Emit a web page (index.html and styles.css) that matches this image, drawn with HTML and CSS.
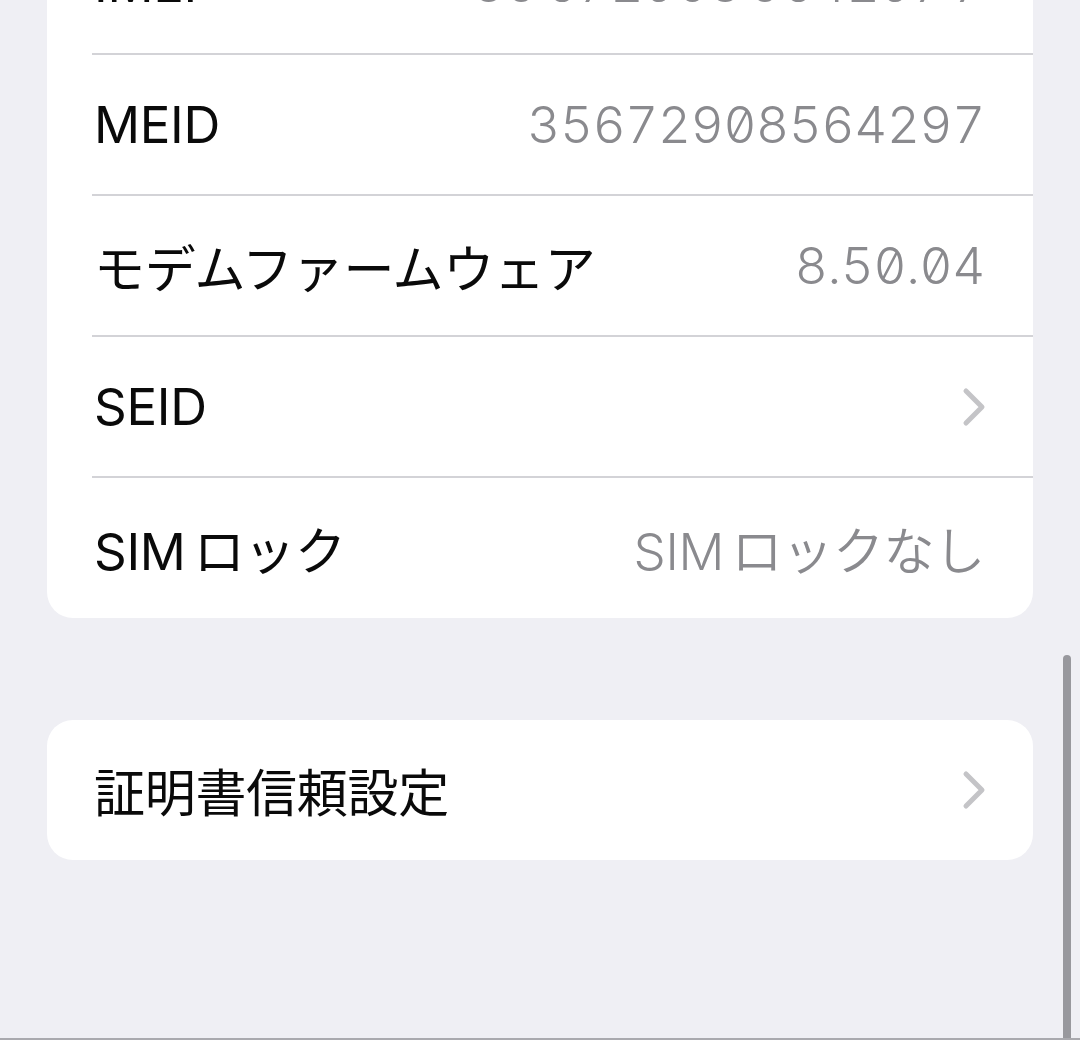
FILE: index.html
```html
<!DOCTYPE html>
<html lang="ja">
<head>
<meta charset="utf-8">
<title>情報</title>
<link rel="stylesheet" href="styles.css">
</head>
<body>
<main class="page">
  <section class="card">
    <div class="row">
      <span class="label">IMEI</span>
      <span class="value">35 672908 564297 7</span>
    </div>
    <div class="row">
      <span class="label">MEID</span>
      <span class="value">35672908564297</span>
    </div>
    <div class="row">
      <span class="label">モデムファームウェア</span>
      <span class="value">8.50.04</span>
    </div>
    <div class="row">
      <span class="label">SEID</span>
      <svg class="chevron" viewBox="0 0 24 40" width="24" height="40" aria-hidden="true"><path d="M4 4 L20 20 L4 36" fill="none" stroke="#c4c4c7" stroke-width="5" stroke-linecap="round" stroke-linejoin="round"/></svg>
    </div>
    <div class="row">
      <span class="label">SIM ロック</span>
      <span class="value">SIM ロックなし</span>
    </div>
  </section>

  <section class="card">
    <div class="row row-single">
      <span class="label">証明書信頼設定</span>
      <svg class="chevron" viewBox="0 0 24 40" width="24" height="40" aria-hidden="true"><path d="M4 4 L20 20 L4 36" fill="none" stroke="#c4c4c7" stroke-width="5" stroke-linecap="round" stroke-linejoin="round"/></svg>
    </div>
  </section>
</main>
<div class="scrollbar"></div>
<div class="bottom-line"></div>
</body>
</html>
```

FILE: styles.css
```css
html, body {
  margin: 0;
  padding: 0;
  height: 100%;
  overflow: hidden;
}

body {
  background: #efeff4;
  font-family: "Inter", "Noto Sans CJK JP", sans-serif;
  font-size: 51px;
  color: #0a0a0a;
  position: relative;
}

.page {
  display: flex;
  flex-direction: column;
  gap: 102px;
  padding: 0 47px;
  margin-top: -86px;
}

.card {
  background: #ffffff;
  border-radius: 26px;
  display: flex;
  flex-direction: column;
}

.row {
  height: 141px;
  box-sizing: border-box;
  margin-left: 45px;
  padding-right: 48px;
  display: flex;
  align-items: center;
  justify-content: space-between;
  border-bottom: 2px solid #d3d3d7;
}

.row:last-child {
  border-bottom: none;
  height: 140px;
}

.row-single:last-child {
  height: 140px;
}

.label {
  padding-left: 2px;
  word-spacing: -6px;
  letter-spacing: -0.3px;
}

.value {
  color: #8a8a8e;
  font-weight: 360;
  font-feature-settings: "tnum" 1, "zero" 1;
  letter-spacing: -0.3px;
  word-spacing: -6px;
}

.chevron {
  display: block;
  margin-right: -1px;
}

.scrollbar {
  position: absolute;
  left: 1063px;
  top: 655px;
  width: 8px;
  bottom: 0;
  background: #98989d;
  border-radius: 4px 4px 0 0;
}

.bottom-line {
  position: absolute;
  left: 0;
  right: 0;
  bottom: 0;
  height: 2px;
  background: #a9a9ae;
}
```
